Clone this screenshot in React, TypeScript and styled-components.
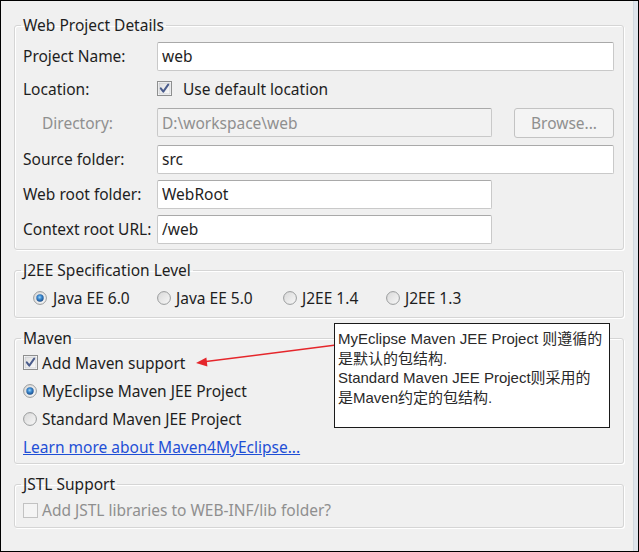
import React from "react";
import styled, { createGlobalStyle } from "styled-components";

const Global = createGlobalStyle`
  html, body { margin: 0; padding: 0; background: #ffffff; }
  * { box-sizing: border-box; }
`;

const FONT = `"Noto Sans", "Open Sans", sans-serif`;
const SIZE = "15.5px";

const Frame = styled.div`
  position: relative;
  width: 639px;
  height: 552px;
  border: 1px solid #000;
  display: flex;
  background: #f0f0f0;
  font-family: ${FONT};
  font-size: ${SIZE};
  color: #1e1e1e;
`;

const Panel = styled.div`
  flex: 1;
  display: flex;
  flex-direction: column;
  gap: 10px;
  padding: 14px 9px 0 13px;
`;

const Edge = styled.div`
  width: 6px;
  background: #dfe5ec;
  border-left: 1px solid #d2d9e0;
`;

const Group = styled.fieldset<{ $pt: number; $pb: number }>`
  margin: 0;
  min-width: 0;
  padding: ${(p) => p.$pt}px 9px ${(p) => p.$pb}px 8px;
  border: 1px solid #d5d5d5;
  border-radius: 3px;
  box-shadow: inset 1px 1px 0 #ffffff, 1px 1px 0 #ffffff;
  display: flex;
  flex-direction: column;
`;

const Legend = styled.legend`
  padding: 0 2px;
  margin-left: -2px;
  line-height: 20px;
  font-size: ${SIZE};
  color: #1e1e1e;
`;

const Rows = styled.div<{ $gap: number }>`
  display: flex;
  flex-direction: column;
  gap: ${(p) => p.$gap}px;
`;

const Row = styled.div<{ $h: number }>`
  display: flex;
  align-items: center;
  height: ${(p) => p.$h}px;
`;

const Label = styled.span<{ $disabled?: boolean; $indent?: number }>`
  width: 134px;
  flex-shrink: 0;
  padding-left: ${(p) => p.$indent ?? 0}px;
  color: ${(p) => (p.$disabled ? "#8f8f8f" : "#1e1e1e")};
  white-space: nowrap;
`;

const TextBox = styled.input<{ $w?: number }>`
  height: 29px;
  width: ${(p) => (p.$w ? `${p.$w}px` : "auto")};
  flex: ${(p) => (p.$w ? "0 0 auto" : "1")};
  border: 1px solid #c9c9c9;
  border-top-color: #a9a9a9;
  border-radius: 2px;
  background: ${(p) => (p.disabled ? "#f2f2f2" : "#ffffff")};
  color: ${(p) => (p.disabled ? "#8f8f8f" : "#1e1e1e")};
  font-family: ${FONT};
  font-size: ${SIZE};
  padding: 0 4px;
  outline: none;
`;

const Button = styled.button`
  margin-left: 22px;
  width: 100px;
  height: 30px;
  border: 1px solid #c3c3c3;
  border-radius: 3px;
  background: #f4f4f4;
  color: #8f8f8f;
  font-family: ${FONT};
  font-size: ${SIZE};
  padding: 0;
`;

const Option = styled.label<{ $gap: number; $disabled?: boolean; $w?: number }>`
  display: inline-flex;
  align-items: center;
  gap: ${(p) => p.$gap}px;
  width: ${(p) => (p.$w ? `${p.$w}px` : "auto")};
  color: ${(p) => (p.$disabled ? "#8f8f8f" : "#1e1e1e")};
  white-space: nowrap;
`;

const RadioLine = styled.div`
  display: flex;
  align-items: center;
  padding-left: 10px;
  height: 20px;
`;

const Link = styled.a`
  color: #1f4fd6;
  text-decoration: underline;
  white-space: nowrap;
`;

const Callout = styled.div`
  position: absolute;
  left: 333px;
  top: 322px;
  width: 276px;
  height: 105px;
  background: #ffffff;
  border: 1px solid #1a1a1a;
  padding: 5px 3px;
  font-family: "Liberation Sans", "Noto Sans CJK SC", sans-serif;
  font-size: 15px;
  line-height: 19.7px;
  color: #2a2a2a;
  white-space: nowrap;
`;

const ArrowSvg = styled.svg`
  position: absolute;
  left: 189px;
  top: 335px;
  overflow: visible;
`;

const CheckBox = ({ checked, disabled }: { checked?: boolean; disabled?: boolean }) => (
  <svg width="15" height="15" viewBox="0 0 15 15">
    <defs>
      <linearGradient id="cbg" x1="0" y1="0" x2="1" y2="1">
        <stop offset="0" stopColor="#dedede" />
        <stop offset="1" stopColor="#fbfbfb" />
      </linearGradient>
    </defs>
    <rect
      x="0.5"
      y="0.5"
      width="14"
      height="14"
      fill={disabled ? "#f4f4f4" : "#ffffff"}
      stroke={disabled ? "#c2c2c2" : "#8e8f8f"}
    />
    {!disabled && <rect x="2" y="2" width="11" height="11" fill="url(#cbg)" stroke="#b9bcc2" strokeWidth="0.6" />}
    {checked && (
      <path d="M3.8 7.4 L6.3 10.6 L11.2 3.6" fill="none" stroke="#4a5c8c" strokeWidth="2" strokeLinecap="round" strokeLinejoin="round" />
    )}
  </svg>
);

const Radio = ({ checked }: { checked?: boolean }) => (
  <svg width="14" height="14" viewBox="0 0 14 14">
    <defs>
      <linearGradient id="rbg" x1="0" y1="0" x2="1" y2="1">
        <stop offset="0" stopColor="#d8d8d8" />
        <stop offset="1" stopColor="#f8f8f8" />
      </linearGradient>
      <radialGradient id="rdot" cx="0.45" cy="0.4" r="0.6">
        <stop offset="0" stopColor="#9fd6f7" />
        <stop offset="0.45" stopColor="#3d8ad0" />
        <stop offset="1" stopColor="#1b4d8a" />
      </radialGradient>
    </defs>
    <circle cx="7" cy="7" r="6.4" fill="url(#rbg)" stroke="#999b9c" strokeWidth="1" />
    {checked && <circle cx="7" cy="7" r="3.7" fill="url(#rdot)" />}
  </svg>
);

export default function App() {
  return (
    <>
      <Global />
      <Frame>
        <Panel>
          <Group $pt={7} $pb={6}>
            <Legend>Web Project Details</Legend>
            <Rows $gap={7}>
              <Row $h={28}>
                <Label>Project Name:</Label>
                <TextBox readOnly defaultValue="web" />
              </Row>
              <Row $h={23}>
                <Label>Location:</Label>
                <Option $gap={11}>
                  <CheckBox checked />
                  Use default location
                </Option>
              </Row>
              <Row $h={31}>
                <Label $disabled $indent={19}>Directory:</Label>
                <TextBox disabled $w={335} defaultValue="D:\workspace\web" />
                <Button disabled>Browse...</Button>
              </Row>
              <Row $h={28}>
                <Label>Source folder:</Label>
                <TextBox readOnly defaultValue="src" />
              </Row>
              <Row $h={28}>
                <Label>Web root folder:</Label>
                <TextBox readOnly $w={335} defaultValue="WebRoot" />
              </Row>
              <Row $h={28}>
                <Label>Context root URL:</Label>
                <TextBox readOnly $w={335} defaultValue="/web" />
              </Row>
            </Rows>
          </Group>

          <Group $pt={8} $pb={9}>
            <Legend>J2EE Specification Level</Legend>
            <RadioLine>
              <Option $gap={6} $w={124}>
                <Radio checked />
                Java EE 6.0
              </Option>
              <Option $gap={5} $w={126}>
                <Radio />
                Java EE 5.0
              </Option>
              <Option $gap={5} $w={103}>
                <Radio />
                J2EE 1.4
              </Option>
              <Option $gap={5}>
                <Radio />
                J2EE 1.3
              </Option>
            </RadioLine>
          </Group>

          <Group $pt={4} $pb={6}>
            <Legend>Maven</Legend>
            <Rows $gap={7}>
              <Row $h={21}>
                <Option $gap={4}>
                  <CheckBox checked />
                  Add Maven support
                </Option>
              </Row>
              <Row $h={21}>
                <Option $gap={5}>
                  <Radio checked />
                  MyEclipse Maven JEE Project
                </Option>
              </Row>
              <Row $h={21}>
                <Option $gap={5}>
                  <Radio />
                  Standard Maven JEE Project
                </Option>
              </Row>
              <Row $h={21}>
                <Link href="#">Learn more about Maven4MyEclipse...</Link>
              </Row>
            </Rows>
          </Group>

          <Group $pt={6} $pb={7}>
            <Legend>JSTL Support</Legend>
            <Row $h={20}>
              <Option $gap={4} $disabled>
                <CheckBox disabled />
                Add JSTL libraries to WEB-INF/lib folder?
              </Option>
            </Row>
          </Group>
        </Panel>
        <Edge />

        <ArrowSvg width="150" height="34" viewBox="0 0 150 34">
          <line x1="146" y1="9" x2="14" y2="25.8" stroke="#e5262b" strokeWidth="1.5" />
          <polygon points="6,27 17.4,30.6 16.4,21.6" fill="#e5262b" />
        </ArrowSvg>

        <Callout>
          MyEclipse Maven JEE Project 则遵循的
          <br />
          是默认的包结构.
          <br />
          Standard Maven JEE Project则采用的
          <br />
          是Maven约定的包结构.
        </Callout>
      </Frame>
    </>
  );
}
